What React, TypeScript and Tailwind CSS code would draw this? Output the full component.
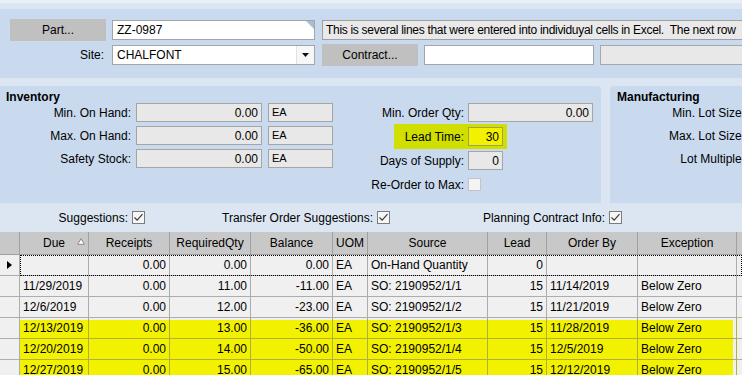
import React from 'react'

type Col = { name: string; w: string; align: 'l' | 'r' }

const cols: Col[] = [
  { name: 'Due', w: 'w-[69px]', align: 'l' },
  { name: 'Receipts', w: 'w-[81px]', align: 'r' },
  { name: 'RequiredQty', w: 'w-[81px]', align: 'r' },
  { name: 'Balance', w: 'w-[82px]', align: 'r' },
  { name: 'UOM', w: 'w-[35px]', align: 'l' },
  { name: 'Source', w: 'w-[120px]', align: 'l' },
  { name: 'Lead', w: 'w-[59px]', align: 'r' },
  { name: 'Order By', w: 'w-[91px]', align: 'l' },
  { name: 'Exception', w: 'w-[99px]', align: 'l' },
]

const rows: { cells: string[]; hl?: 'first' | 'yes' }[] = [
  { cells: ['', '0.00', '0.00', '0.00', 'EA', 'On-Hand Quantity', '0', '', ''] },
  { cells: ['11/29/2019', '0.00', '11.00', '-11.00', 'EA', 'SO: 2190952/1/1', '15', '11/14/2019', 'Below Zero'] },
  { cells: ['12/6/2019', '0.00', '12.00', '-23.00', 'EA', 'SO: 2190952/1/2', '15', '11/21/2019', 'Below Zero'] },
  { cells: ['12/13/2019', '0.00', '13.00', '-36.00', 'EA', 'SO: 2190952/1/3', '15', '11/28/2019', 'Below Zero'], hl: 'first' },
  { cells: ['12/20/2019', '0.00', '14.00', '-50.00', 'EA', 'SO: 2190952/1/4', '15', '12/5/2019', 'Below Zero'], hl: 'yes' },
  { cells: ['12/27/2019', '0.00', '15.00', '-65.00', 'EA', 'SO: 2190952/1/5', '15', '12/12/2019', 'Below Zero'], hl: 'yes' },
]

function Check({ checked = true }: { checked?: boolean }) {
  if (!checked) {
    return <span className="block h-[13px] w-[13px] border border-[#c4c4c4] bg-[#f4f4f4]" />
  }
  return (
    <span className="flex h-[13px] w-[13px] items-center justify-center border border-[#7b7b7b] bg-[#f6f6f6]">
      <svg width="11" height="11" viewBox="0 0 11 11">
        <path d="M1.5 5.5 L4.2 8.2 L9.5 2.2" fill="none" stroke="#3a3a3a" strokeWidth="1.2" />
      </svg>
    </span>
  )
}

function Field({ label, value, unit }: { label: string; value: string; unit: string }) {
  return (
    <div className="flex h-[19px] items-center">
      <span className="w-[132px] pr-[1px] text-right">{label}</span>
      <div className="ml-[4px] flex h-[19px] w-[126px] items-center justify-end border border-[#a5a5a5] bg-[#e8e8e8] pr-[3px]">
        {value}
      </div>
      <div className="ml-[6px] flex h-[19px] w-[65px] items-center border border-[#a5a5a5] bg-[#e8e8e8] pl-[3px] text-[11px]">
        {unit}
      </div>
    </div>
  )
}

function cellBg(hl: 'first' | 'yes' | undefined, last: boolean) {
  if (!hl) return 'bg-[#f0f0f0] border-[#adadad]'
  if (last) {
    return hl === 'first'
      ? 'border-[#b0b040] bg-[linear-gradient(to_bottom,#f0f0f0_2px,transparent_2px),linear-gradient(to_right,#f2f200_95px,#f0f0f0_95px)]'
      : 'border-[#b0b040] bg-[linear-gradient(to_right,#f2f200_95px,#f0f0f0_95px)]'
  }
  return hl === 'first'
    ? 'border-[#b0b040] bg-[linear-gradient(to_bottom,#f0f0f0_2px,#f2f200_2px)]'
    : 'border-[#b0b040] bg-[#f2f200]'
}

export default function App() {
  return (
    <div className="h-[375px] w-[742px] overflow-hidden bg-[#dce6f2] font-['Liberation_Sans',Arial,sans-serif] text-[12px] leading-none text-black">
      <div className="h-[3px] bg-[#e9eff7]" />
      <div className="h-[6px]" />

      {/* header panel */}
      <div className="h-[69px] bg-[#c9daee] pt-[10px]">
        <div className="flex h-[22px] items-center">
          <button className="ml-[10px] h-[22px] w-[96px] shrink-0 bg-[#c0c0c0] text-[12px]">Part...</button>
          <div className="relative ml-[6px] flex h-[20px] w-[203px] shrink-0 items-center border border-[#a5a5a5] bg-white pl-[4px]">
            ZZ-0987
            <svg className="absolute right-0 top-0" width="8" height="8" viewBox="0 0 8 8">
              <path d="M0 0 H8 V8 Z" fill="#a9bcd6" />
            </svg>
          </div>
          <div className="ml-[7px] flex h-[20px] w-[440px] shrink-0 items-center overflow-hidden whitespace-pre border border-[#a0a0a0] bg-[#e9e9e9] pl-[3px] tracking-[-0.3px]">
            This is several lines that were entered into individuyal cells in Excel.  The next row
          </div>
        </div>
        <div className="mt-[3px] flex h-[22px] items-center">
          <span className="w-[104px] shrink-0 text-right">Site:</span>
          <div className="ml-[8px] flex h-[20px] w-[203px] shrink-0 items-center border border-[#a5a5a5] bg-white">
            <span className="flex-1 pl-[4px]">CHALFONT</span>
            <span className="flex h-full w-[18px] items-center justify-center border-l border-[#e2e2e2] bg-[#f7f7f7]">
              <svg width="7" height="4" viewBox="0 0 7 4">
                <path d="M0 0 H7 L3.5 4 Z" fill="#111" />
              </svg>
            </span>
          </div>
          <button className="ml-[7px] h-[22px] w-[96px] shrink-0 bg-[#c0c0c0] text-[12px]">Contract...</button>
          <div className="ml-[6px] h-[20px] w-[170px] shrink-0 border border-[#a5a5a5] bg-white" />
          <div className="ml-[6px] h-[20px] w-[200px] shrink-0 border border-[#a8a8a8] bg-[#e8e8e8]" />
        </div>
      </div>

      <div className="h-[8px]" />

      {/* inventory + manufacturing */}
      <div className="flex h-[117px]">
        <div className="w-[601px] shrink-0 rounded-tr-[4px] bg-[#c9daee]">
          <div className="h-[17px] pl-[6px] pt-[5px] font-bold">Inventory</div>
          <div className="flex">
            <div className="flex w-[333px] shrink-0 flex-col gap-[4px]">
              <Field label="Min. On Hand:" value="0.00" unit="EA" />
              <Field label="Max. On Hand:" value="0.00" unit="EA" />
              <Field label="Safety Stock:" value="0.00" unit="EA" />
            </div>
            <div className="ml-[7px] flex flex-col gap-[5px]">
              <div className="flex h-[19px] items-center">
                <span className="w-[124px] text-right">Min. Order Qty:</span>
                <div className="ml-[4px] flex h-[19px] w-[125px] items-center justify-end border border-[#a5a5a5] bg-[#e8e8e8] pr-[3px]">
                  0.00
                </div>
              </div>
              <div className="flex h-[19px] items-center">
                <div className="ml-[54px] flex h-[25px] items-center bg-[#d0df00] pr-[4px]">
                  <span className="w-[70px] text-right">Lead Time:</span>
                  <div className="ml-[4px] flex h-[19px] w-[35px] items-center justify-end border border-[#a0a060] bg-[#f2f200] pr-[3px]">
                    30
                  </div>
                </div>
              </div>
              <div className="flex h-[19px] items-center">
                <span className="w-[124px] text-right">Days of Supply:</span>
                <div className="ml-[4px] flex h-[19px] w-[35px] items-center justify-end border border-[#a5a5a5] bg-[#e8e8e8] pr-[3px]">
                  0
                </div>
              </div>
              <div className="flex h-[19px] items-center">
                <span className="w-[124px] text-right">Re-Order to Max:</span>
                <span className="ml-[4px]">
                  <Check checked={false} />
                </span>
              </div>
            </div>
          </div>
        </div>
        <div className="ml-[9px] w-[200px] shrink-0 rounded-tl-[4px] bg-[#c9daee]">
          <div className="h-[17px] pl-[7px] pt-[5px] font-bold">Manufacturing</div>
          <div className="flex flex-col gap-[4px]">
            {['Min. Lot Size:', 'Max. Lot Size:', 'Lot Multiple:'].map((l) => (
              <div key={l} className="flex h-[19px] items-center">
                <span className="w-[135px] text-right">{l}</span>
              </div>
            ))}
          </div>
        </div>
      </div>

      {/* suggestions */}
      <div className="flex h-[29px] items-center">
        <span className="w-[128px] shrink-0 text-right">Suggestions:</span>
        <span className="ml-[4px]">
          <Check />
        </span>
        <span className="w-[228px] shrink-0 text-right">Transfer Order Suggestions:</span>
        <span className="ml-[4px]">
          <Check />
        </span>
        <span className="w-[215px] shrink-0 text-right">Planning Contract Info:</span>
        <span className="ml-[4px]">
          <Check />
        </span>
      </div>

      {/* grid */}
      <div className="flex h-[23px] bg-[#c8c8c8]">
        <div className="w-[20px] shrink-0 border-b border-r border-[#a0a0a0]" />
        {cols.map((c) => (
          <div
            key={c.name}
            className={`${c.w} relative flex shrink-0 items-center justify-center border-b border-r border-[#a0a0a0]`}
          >
            {c.name}
            {c.name === 'Due' && (
              <svg className="absolute right-[3px] top-[6px]" width="8" height="7" viewBox="0 0 8 7">
                <path d="M4 0.7 L7.3 6.3 H0.7 Z" fill="#fff" stroke="#8a8a8a" strokeWidth="1" />
              </svg>
            )}
          </div>
        ))}
        <div className="flex-1 border-b border-[#a0a0a0]" />
      </div>

      {rows.map((r, i) => (
        <div key={i} className="flex h-[21px]">
          <div className="flex w-[20px] shrink-0 items-center border-b border-r border-[#adadad] bg-[#f0f0f0] pl-[7px]">
            {i === 0 && (
              <svg width="5" height="8" viewBox="0 0 5 8">
                <path d="M0 0 L5 4 L0 8 Z" fill="#000" />
              </svg>
            )}
          </div>
          <div
            className={`relative flex flex-1 ${
              i === 0
                ? 'after:pointer-events-none after:absolute after:inset-0 after:border after:border-dotted after:border-black'
                : ''
            }`}
          >
            {cols.map((c, j) => (
              <div
                key={c.name}
                className={`${c.w} flex shrink-0 items-center whitespace-nowrap border-b border-r ${cellBg(
                  r.hl,
                  j === cols.length - 1,
                )} ${c.align === 'r' ? 'justify-end pr-[3px]' : 'pl-[3px]'}`}
              >
                {r.cells[j]}
              </div>
            ))}
            <div className="flex-1 border-b border-[#adadad] bg-[#f0f0f0]" />
          </div>
        </div>
      ))}
    </div>
  )
}
